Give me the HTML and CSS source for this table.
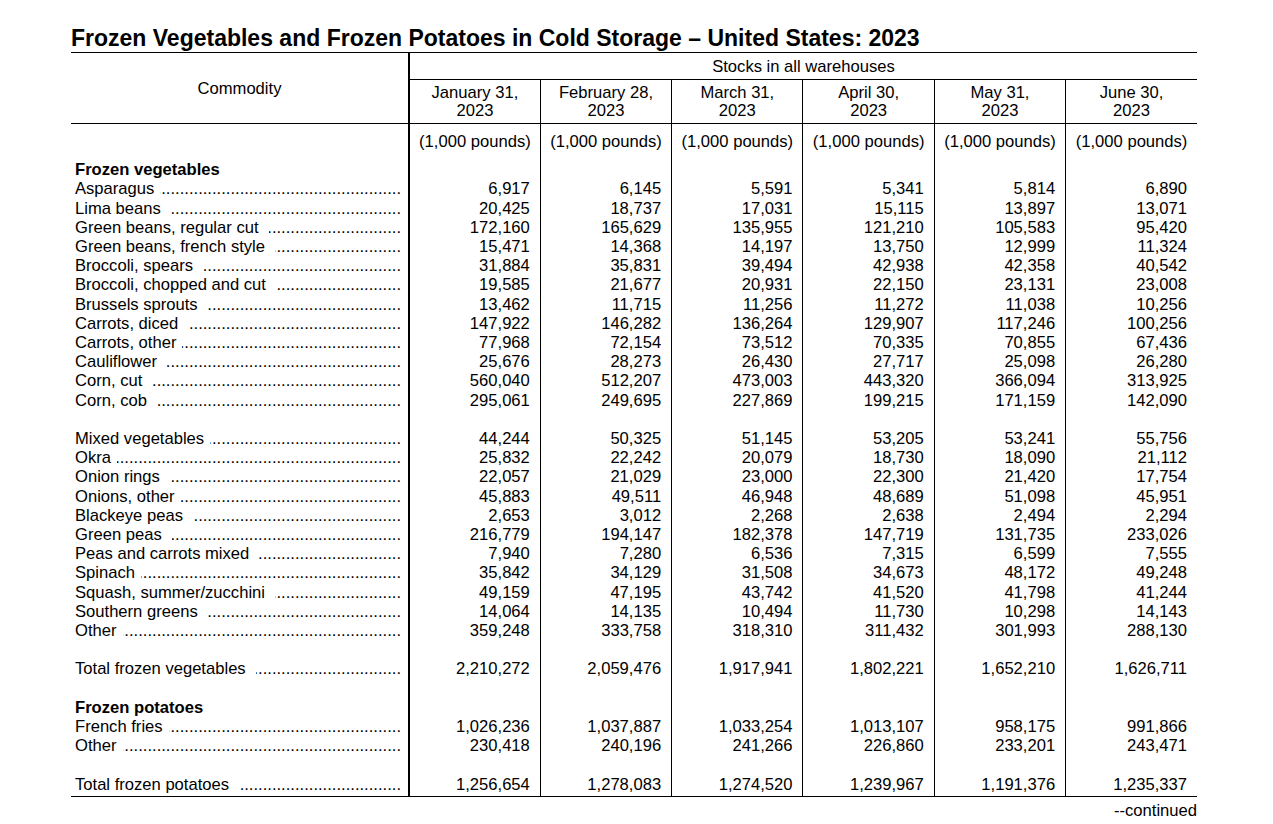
FILE: index.html
```html
<!DOCTYPE html>
<html lang="en">
<head>
<meta charset="utf-8">
<title>Frozen Vegetables and Frozen Potatoes in Cold Storage</title>
<link rel="stylesheet" href="styles.css">
</head>
<body>
<div class="page">
  <h1 class="title">Frozen Vegetables and Frozen Potatoes in Cold Storage – United States: 2023</h1>
  <table class="tbl">
    <colgroup>
      <col class="c-lbl"><col><col><col><col><col><col>
    </colgroup>
    <thead>
      <tr class="h1row">
        <th class="commodity" rowspan="2">Commodity</th>
        <th class="stocks" colspan="6">Stocks in all warehouses</th>
      </tr>
      <tr class="h2row">
        <th class="date first">January 31,<br>2023</th>
        <th class="date">February 28,<br>2023</th>
        <th class="date">March 31,<br>2023</th>
        <th class="date">April 30,<br>2023</th>
        <th class="date">May 31,<br>2023</th>
        <th class="date">June 30,<br>2023</th>
      </tr>
    </thead>
    <tbody>
      <tr class="units">
        <td class="lbl"></td>
        <td class="u first">(1,000 pounds)</td><td class="u">(1,000 pounds)</td><td class="u">(1,000 pounds)</td><td class="u">(1,000 pounds)</td><td class="u">(1,000 pounds)</td><td class="u">(1,000 pounds)</td>
      </tr>
      <tr><td class="lbl sect">Frozen vegetables</td><td class="n first"></td><td class="n"></td><td class="n"></td><td class="n"></td><td class="n"></td><td class="n"></td></tr>
      <tr><td class="lbl"><div class="lw"><span>Asparagus</span><span class="lead"></span></div></td><td class="n first">6,917</td><td class="n">6,145</td><td class="n">5,591</td><td class="n">5,341</td><td class="n">5,814</td><td class="n">6,890</td></tr>
      <tr><td class="lbl"><div class="lw"><span>Lima beans</span><span class="lead wide"></span></div></td><td class="n first">20,425</td><td class="n">18,737</td><td class="n">17,031</td><td class="n">15,115</td><td class="n">13,897</td><td class="n">13,071</td></tr>
      <tr><td class="lbl"><div class="lw"><span>Green beans, regular cut</span><span class="lead wide"></span></div></td><td class="n first">172,160</td><td class="n">165,629</td><td class="n">135,955</td><td class="n">121,210</td><td class="n">105,583</td><td class="n">95,420</td></tr>
      <tr><td class="lbl"><div class="lw"><span>Green beans, french style</span><span class="lead wide"></span></div></td><td class="n first">15,471</td><td class="n">14,368</td><td class="n">14,197</td><td class="n">13,750</td><td class="n">12,999</td><td class="n">11,324</td></tr>
      <tr><td class="lbl"><div class="lw"><span>Broccoli, spears</span><span class="lead wide"></span></div></td><td class="n first">31,884</td><td class="n">35,831</td><td class="n">39,494</td><td class="n">42,938</td><td class="n">42,358</td><td class="n">40,542</td></tr>
      <tr><td class="lbl"><div class="lw"><span>Broccoli, chopped and cut</span><span class="lead wide"></span></div></td><td class="n first">19,585</td><td class="n">21,677</td><td class="n">20,931</td><td class="n">22,150</td><td class="n">23,131</td><td class="n">23,008</td></tr>
      <tr><td class="lbl"><div class="lw"><span>Brussels sprouts</span><span class="lead wide"></span></div></td><td class="n first">13,462</td><td class="n">11,715</td><td class="n">11,256</td><td class="n">11,272</td><td class="n">11,038</td><td class="n">10,256</td></tr>
      <tr><td class="lbl"><div class="lw"><span>Carrots, diced</span><span class="lead wide"></span></div></td><td class="n first">147,922</td><td class="n">146,282</td><td class="n">136,264</td><td class="n">129,907</td><td class="n">117,246</td><td class="n">100,256</td></tr>
      <tr><td class="lbl"><div class="lw"><span>Carrots, other</span><span class="lead"></span></div></td><td class="n first">77,968</td><td class="n">72,154</td><td class="n">73,512</td><td class="n">70,335</td><td class="n">70,855</td><td class="n">67,436</td></tr>
      <tr><td class="lbl"><div class="lw"><span>Cauliflower</span><span class="lead wide"></span></div></td><td class="n first">25,676</td><td class="n">28,273</td><td class="n">26,430</td><td class="n">27,717</td><td class="n">25,098</td><td class="n">26,280</td></tr>
      <tr><td class="lbl"><div class="lw"><span>Corn, cut</span><span class="lead wide"></span></div></td><td class="n first">560,040</td><td class="n">512,207</td><td class="n">473,003</td><td class="n">443,320</td><td class="n">366,094</td><td class="n">313,925</td></tr>
      <tr><td class="lbl"><div class="lw"><span>Corn, cob</span><span class="lead wide"></span></div></td><td class="n first">295,061</td><td class="n">249,695</td><td class="n">227,869</td><td class="n">199,215</td><td class="n">171,159</td><td class="n">142,090</td></tr>
      <tr class="blank"><td class="lbl"></td><td class="n first"></td><td class="n"></td><td class="n"></td><td class="n"></td><td class="n"></td><td class="n"></td></tr>
      <tr><td class="lbl"><div class="lw"><span>Mixed vegetables</span><span class="lead"></span></div></td><td class="n first">44,244</td><td class="n">50,325</td><td class="n">51,145</td><td class="n">53,205</td><td class="n">53,241</td><td class="n">55,756</td></tr>
      <tr><td class="lbl"><div class="lw"><span>Okra</span><span class="lead"></span></div></td><td class="n first">25,832</td><td class="n">22,242</td><td class="n">20,079</td><td class="n">18,730</td><td class="n">18,090</td><td class="n">21,112</td></tr>
      <tr><td class="lbl"><div class="lw"><span>Onion rings</span><span class="lead wide"></span></div></td><td class="n first">22,057</td><td class="n">21,029</td><td class="n">23,000</td><td class="n">22,300</td><td class="n">21,420</td><td class="n">17,754</td></tr>
      <tr><td class="lbl"><div class="lw"><span>Onions, other</span><span class="lead"></span></div></td><td class="n first">45,883</td><td class="n">49,511</td><td class="n">46,948</td><td class="n">48,689</td><td class="n">51,098</td><td class="n">45,951</td></tr>
      <tr><td class="lbl"><div class="lw"><span>Blackeye peas</span><span class="lead wide"></span></div></td><td class="n first">2,653</td><td class="n">3,012</td><td class="n">2,268</td><td class="n">2,638</td><td class="n">2,494</td><td class="n">2,294</td></tr>
      <tr><td class="lbl"><div class="lw"><span>Green peas</span><span class="lead wide"></span></div></td><td class="n first">216,779</td><td class="n">194,147</td><td class="n">182,378</td><td class="n">147,719</td><td class="n">131,735</td><td class="n">233,026</td></tr>
      <tr><td class="lbl"><div class="lw"><span>Peas and carrots mixed</span><span class="lead wide"></span></div></td><td class="n first">7,940</td><td class="n">7,280</td><td class="n">6,536</td><td class="n">7,315</td><td class="n">6,599</td><td class="n">7,555</td></tr>
      <tr><td class="lbl"><div class="lw"><span>Spinach</span><span class="lead"></span></div></td><td class="n first">35,842</td><td class="n">34,129</td><td class="n">31,508</td><td class="n">34,673</td><td class="n">48,172</td><td class="n">49,248</td></tr>
      <tr><td class="lbl"><div class="lw"><span>Squash, summer/zucchini</span><span class="lead wide"></span></div></td><td class="n first">49,159</td><td class="n">47,195</td><td class="n">43,742</td><td class="n">41,520</td><td class="n">41,798</td><td class="n">41,244</td></tr>
      <tr><td class="lbl"><div class="lw"><span>Southern greens</span><span class="lead wide"></span></div></td><td class="n first">14,064</td><td class="n">14,135</td><td class="n">10,494</td><td class="n">11,730</td><td class="n">10,298</td><td class="n">14,143</td></tr>
      <tr><td class="lbl"><div class="lw"><span>Other</span><span class="lead"></span></div></td><td class="n first">359,248</td><td class="n">333,758</td><td class="n">318,310</td><td class="n">311,432</td><td class="n">301,993</td><td class="n">288,130</td></tr>
      <tr class="blank"><td class="lbl"></td><td class="n first"></td><td class="n"></td><td class="n"></td><td class="n"></td><td class="n"></td><td class="n"></td></tr>
      <tr><td class="lbl"><div class="lw"><span>Total frozen vegetables</span><span class="lead wide"></span></div></td><td class="n first">2,210,272</td><td class="n">2,059,476</td><td class="n">1,917,941</td><td class="n">1,802,221</td><td class="n">1,652,210</td><td class="n">1,626,711</td></tr>
      <tr class="blank"><td class="lbl"></td><td class="n first"></td><td class="n"></td><td class="n"></td><td class="n"></td><td class="n"></td><td class="n"></td></tr>
      <tr><td class="lbl sect">Frozen potatoes</td><td class="n first"></td><td class="n"></td><td class="n"></td><td class="n"></td><td class="n"></td><td class="n"></td></tr>
      <tr><td class="lbl"><div class="lw"><span>French fries</span><span class="lead"></span></div></td><td class="n first">1,026,236</td><td class="n">1,037,887</td><td class="n">1,033,254</td><td class="n">1,013,107</td><td class="n">958,175</td><td class="n">991,866</td></tr>
      <tr><td class="lbl"><div class="lw"><span>Other</span><span class="lead"></span></div></td><td class="n first">230,418</td><td class="n">240,196</td><td class="n">241,266</td><td class="n">226,860</td><td class="n">233,201</td><td class="n">243,471</td></tr>
      <tr class="blank"><td class="lbl"></td><td class="n first"></td><td class="n"></td><td class="n"></td><td class="n"></td><td class="n"></td><td class="n"></td></tr>
      <tr class="last"><td class="lbl"><div class="lw"><span>Total frozen potatoes</span><span class="lead wide"></span></div></td><td class="n first">1,256,654</td><td class="n">1,278,083</td><td class="n">1,274,520</td><td class="n">1,239,967</td><td class="n">1,191,376</td><td class="n">1,235,337</td></tr>
    </tbody>
  </table>
  <div class="cont">--continued</div>
</div>
</body>
</html>
```

FILE: styles.css
```css
html, body {
  margin: 0;
  padding: 0;
  background: #ffffff;
}

body {
  font-family: "Liberation Sans", Arial, sans-serif;
  color: #000000;
}

.page {
  width: 1126px;
  margin-left: 71px;
  padding-top: 24px;
}

.title {
  margin: 0;
  font-size: 23px;
  line-height: 28px;
  font-weight: bold;
  white-space: nowrap;
}

.tbl {
  width: 1126px;
  border-collapse: collapse;
  table-layout: fixed;
  font-size: 16.6px;
}

.c-lbl {
  width: 338px;
}

:where(.tbl) th,
:where(.tbl) td {
  padding: 0;
  font-weight: normal;
}

.h1row th {
  border-top: 1px solid #000;
}

.commodity {
  text-align: center;
  vertical-align: middle;
  border-bottom: 1px solid #000;
  border-right: 2px solid #000;
  line-height: 19px;
}

.stocks {
  height: 26px;
  text-align: center;
  vertical-align: middle;
  border-bottom: 1px solid #000;
  line-height: 19px;
}

.tbl th.date {
  text-align: center;
  line-height: 18px;
  padding: 4px 0 3px 0;
  border-left: 1px solid #000;
  border-bottom: 1px solid #000;
}

.tbl th.date.first,
.tbl td.u.first,
.tbl td.n.first {
  border-left: 2px solid #000;
}

.tbl .units td {
  padding-top: 8px;
  padding-bottom: 9px;
  line-height: 19.2px;
}

.tbl td.u {
  text-align: center;
  border-left: 1px solid #000;
}

.tbl tbody td {
  height: 19.2px;
  line-height: 19.2px;
}

.tbl td.n {
  text-align: right;
  padding-right: 10px;
  border-left: 1px solid #000;
  white-space: nowrap;
}

.tbl td.lbl {
  padding-left: 4px;
  padding-right: 7px;
  white-space: nowrap;
}

.tbl td.lbl.sect {
  font-weight: bold;
}

.lw {
  display: flex;
  align-items: baseline;
}

.lead {
  flex: 1;
  overflow: hidden;
  white-space: nowrap;
  direction: rtl;
  margin-left: 6px;
}

.lead.wide {
  margin-left: 10px;
}

.lead::after {
  content: "................................................................................................................";
}

.tbl .last td {
  padding-bottom: 2px;
  border-bottom: 1px solid #000;
}

.cont {
  text-align: right;
  font-size: 16.6px;
  line-height: 19.2px;
  padding-top: 4px;
}
```
